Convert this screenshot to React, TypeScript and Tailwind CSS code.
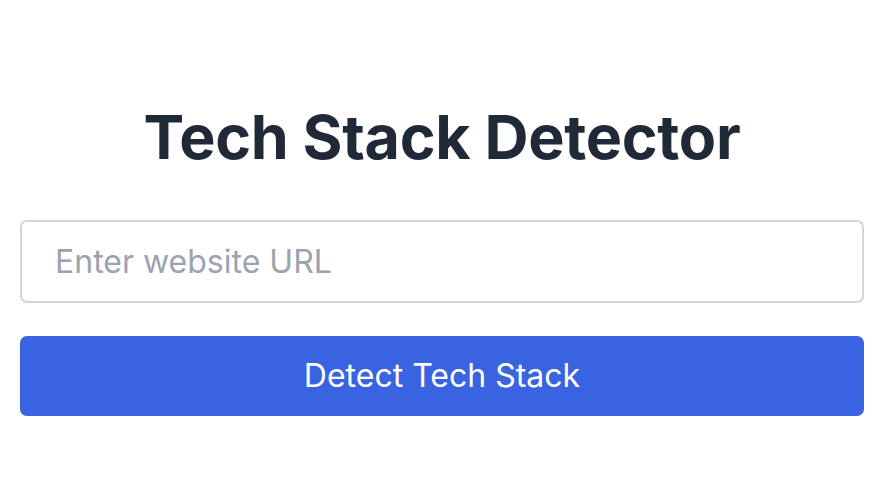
export default function App() {
  return (
    <div className="min-h-screen bg-white font-['Inter',sans-serif]">
      <div className="pl-5 pr-6 pt-[104px]">
        <h1 className="text-center text-[61px] font-bold leading-[66px] text-[#1f2937] tracking-[-0.005em]">
          Tech Stack Detector
        </h1>
        <div className="mt-[50px]">
          <input
            type="text"
            placeholder="Enter website URL"
            className="h-[83px] w-full rounded-[7px] border-2 border-[#d1d5db] bg-white px-[33px] text-[32px] text-[#1f2937] placeholder:text-[#9ca3af] outline-none"
          />
        </div>
        <button
          type="button"
          className="mt-[33px] flex h-[80px] w-full items-center justify-center rounded-[7px] bg-[#3a63e2] text-[32px] text-white"
        >
          Detect Tech Stack
        </button>
      </div>
    </div>
  );
}
